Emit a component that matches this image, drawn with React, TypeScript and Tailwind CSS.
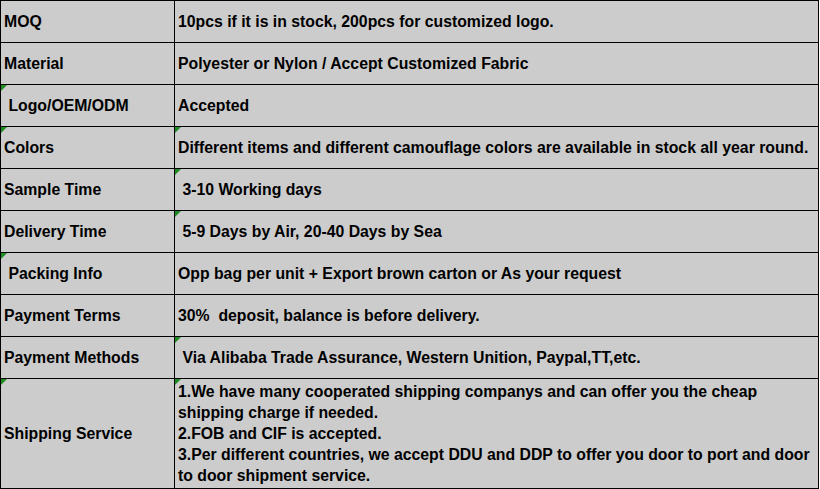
import React from "react";

type Row = {
    label: string;
    value: React.ReactNode;
    markLabel?: boolean;
    markValue?: boolean;
    tall?: boolean;
};

const rows: Row[] = [
    { label: "MOQ", value: "10pcs if it is in stock, 200pcs for customized logo." },
    { label: "Material", value: "Polyester or Nylon / Accept Customized Fabric" },
    { label: " Logo/OEM/ODM", value: "Accepted", markLabel: true },
    {
        label: "Colors",
        value: "Different items and different camouflage colors are available in stock all year round.",
        markLabel: true,
        markValue: true,
    },
    { label: "Sample Time", value: " 3-10 Working days", markValue: true },
    { label: "Delivery Time", value: " 5-9 Days by Air, 20-40 Days by Sea", markValue: true },
    { label: " Packing Info", value: "Opp bag per unit + Export brown carton or As your request", markLabel: true },
    { label: "Payment Terms", value: "30%  deposit, balance is before delivery." },
    {
        label: "Payment Methods",
        value: " Via Alibaba Trade Assurance, Western Unition, Paypal,TT,etc.",
        markValue: true,
    },
    {
        label: "Shipping Service",
        value: (
            <>
                1.We have many cooperated shipping companys and can offer you the cheap
                <br />
                shipping charge if needed.
                <br />
                2.FOB and CIF is accepted.
                <br />
                3.Per different countries, we accept DDU and DDP to offer you door to port and door
                <br />
                to door shipment service.
            </>
        ),
        markLabel: true,
        markValue: true,
        tall: true,
    },
];

const Mark: React.FC = () => (
    <svg className="absolute left-0 top-0" width="6" height="6" viewBox="0 0 6 6">
        <polygon points="0,0 6,0 0,6" fill="#1f8a1f" />
    </svg>
);

export default function App() {
    return (
        <div className="w-[820px] h-[489px] bg-white">
            <div
                className="w-[819px] border-t border-l border-black bg-[#cccccc] text-black font-bold text-[15.8px] leading-[21px]"
                style={{ fontFamily: '"Liberation Sans", Arial, sans-serif' }}
            >
                {rows.map((row) => (
                    <div
                        key={row.label}
                        className={`grid grid-cols-[174px_1fr] ${row.tall ? "h-[110px]" : "h-[42px]"}`}
                    >
                        <div className="relative flex items-center border-r border-b border-black pl-[3px] whitespace-pre">
                            {row.markLabel && <Mark />}
                            {row.label}
                        </div>
                        <div className="relative flex items-center border-r border-b border-black pl-[3px] whitespace-pre">
                            {row.markValue && <Mark />}
                            <div>{row.value}</div>
                        </div>
                    </div>
                ))}
            </div>
        </div>
    );
}
